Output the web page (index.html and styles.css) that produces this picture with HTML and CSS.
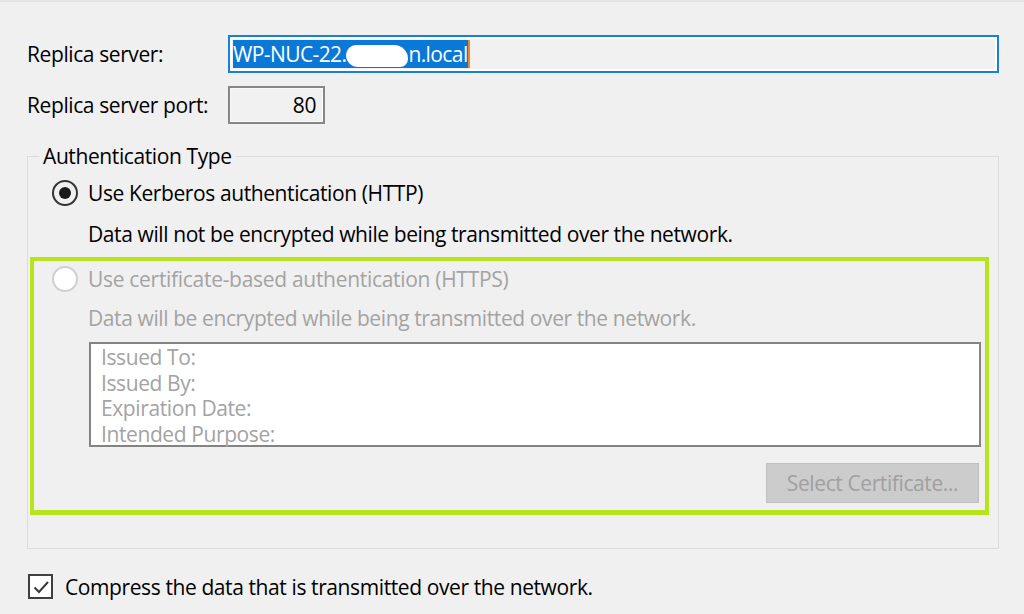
FILE: index.html
```html
<!DOCTYPE html>
<html lang="en">
<head>
<meta charset="utf-8">
<title>Replication Configuration</title>
<link rel="stylesheet" href="styles.css">
</head>
<body>
<div class="dialog">
  <div class="row row-server">
    <label class="label">Replica server:</label>
    <div class="input input-focus">
      <span class="sel">WP-NUC-22.<span class="redact"></span>n.local</span><span class="caret"></span>
    </div>
  </div>
  <div class="row row-port">
    <label class="label">Replica server port:</label>
    <div class="input input-port">80</div>
  </div>

  <fieldset class="group">
    <legend class="legend">Authentication Type</legend>
    <div class="option">
      <span class="radio checked"></span>
      <span class="opt-text">Use Kerberos authentication (HTTP)</span>
    </div>
    <div class="desc">Data will not be encrypted while being transmitted over the network.</div>

    <div class="highlight">
      <div class="option option-disabled">
        <span class="radio disabled"></span>
        <span class="opt-text">Use certificate-based authentication (HTTPS)</span>
      </div>
      <div class="desc desc-disabled">Data will be encrypted while being transmitted over the network.</div>
      <div class="cert-box">
        <div class="cert-line">Issued To:</div>
        <div class="cert-line">Issued By:</div>
        <div class="cert-line">Expiration Date:</div>
        <div class="cert-line">Intended Purpose:</div>
      </div>
      <div class="btn-row">
        <div class="btn">Select Certificate...</div>
      </div>
    </div>
  </fieldset>

  <div class="check-row">
    <span class="checkbox">
      <svg width="20" height="20" viewBox="0 0 20 20"><path d="M3.5 10.5 L8 15 L17 5" fill="none" stroke="#3a3a3a" stroke-width="2"/></svg>
    </span>
    <span class="check-text">Compress the data that is transmitted over the network.</span>
  </div>
</div>
</body>
</html>
```

FILE: styles.css
```css
* { box-sizing: border-box; }

html, body {
  margin: 0;
  padding: 0;
  background: #f0f0f0;
}

body {
  border-top: 2px solid #e3e3e3;
  font-family: "Open Sans", "Noto Sans", sans-serif;
  font-size: 21px;
  letter-spacing: -0.4px;
  color: #000;
  width: 1024px;
  height: 614px;
  overflow: hidden;
}

.dialog {
  padding: 33px 25px 0 27px;
}

.row {
  display: grid;
  grid-template-columns: 201px 1fr;
  align-items: center;
  height: 38px;
}

.row-port {
  margin-top: 13px;
}

.label {
  line-height: 24px;
}

.input {
  height: 38px;
  display: flex;
  align-items: center;
  background: #f1f1f1;
}

.input-focus {
  border: 2px solid #1a7fd6;
  box-shadow: inset 0 0 0 2px #ffffff;
  padding-left: 3px;
}

.sel {
  display: inline-block;
  background: #0a78d7;
  color: #ffffff;
  line-height: 28px;
  height: 28px;
  white-space: nowrap;
  letter-spacing: -0.6px;
}

.redact {
  display: inline-block;
  width: 62px;
  height: 22px;
  vertical-align: -5px;
  background: #ffffff;
  border-radius: 10px 14px 8px 12px;
}

.caret {
  display: inline-block;
  width: 2px;
  height: 28px;
  background: #e8892a;
}

.input-port {
  width: 97px;
  border: 2px solid #868686;
  box-shadow: inset 0 0 0 1px #fafafa;
  justify-content: flex-end;
  padding-right: 7px;
}

.group {
  margin: 20px 0 0 0;
  padding: 0 0 33px 0;
  border: 1px solid #dcdcdc;
  min-width: 0;
}

.legend {
  margin-left: 11px;
  padding: 0 4px;
  line-height: 24px;
}

.option {
  display: flex;
  align-items: center;
  height: 26px;
  margin-top: 12px;
  margin-left: 24px;
}

.radio {
  width: 26px;
  height: 26px;
  border-radius: 50%;
  flex: none;
  margin-right: 10px;
  position: relative;
}

.radio.checked {
  border: 2px solid #333333;
  background: #f0f0f0;
}

.radio.checked::after {
  content: "";
  position: absolute;
  left: 5px;
  top: 5px;
  width: 12px;
  height: 12px;
  border-radius: 50%;
  background: #1a1a1a;
}

.radio.disabled {
  border: 2px solid #cfcfcf;
  background: #ffffff;
}

.opt-text {
  line-height: 24px;
}

.desc {
  margin-top: 16px;
  padding-left: 60px;
  line-height: 24px;
}

.highlight {
  margin: 11px 9px 0 2px;
  border: 4px solid #b7e41b;
  border-bottom-width: 5px;
  padding: 5px 0 7px 0;
}

.option-disabled {
  margin-top: 0;
  margin-left: 18px;
  color: #a3a3a3;
  letter-spacing: -0.3px;
}

.desc-disabled {
  margin-top: 14px;
  padding-left: 54px;
  color: #a3a3a3;
}

.cert-box {
  margin: 12px 4px 0 55px;
  height: 105px;
  border: 2px solid #838383;
  background: #ffffff;
  padding: 1px 0 0 10px;
  color: #a3a3a3;
}

.cert-line {
  line-height: 25.5px;
}

.btn-row {
  display: flex;
  justify-content: flex-end;
  margin: 16px 6px 0 0;
}

.btn {
  width: 213px;
  height: 40px;
  background: #cccccc;
  border: 1px solid #bfbfbf;
  color: #a0a0a0;
  display: flex;
  align-items: center;
  justify-content: center;
}

.check-row {
  display: flex;
  align-items: center;
  margin-top: 25px;
  margin-left: 1px;
}

.checkbox {
  width: 25px;
  height: 25px;
  border: 2px solid #3f3f3f;
  background: #ffffff;
  display: flex;
  align-items: center;
  justify-content: center;
  flex: none;
  margin-right: 12px;
}

.check-text {
  line-height: 24px;
}
```
